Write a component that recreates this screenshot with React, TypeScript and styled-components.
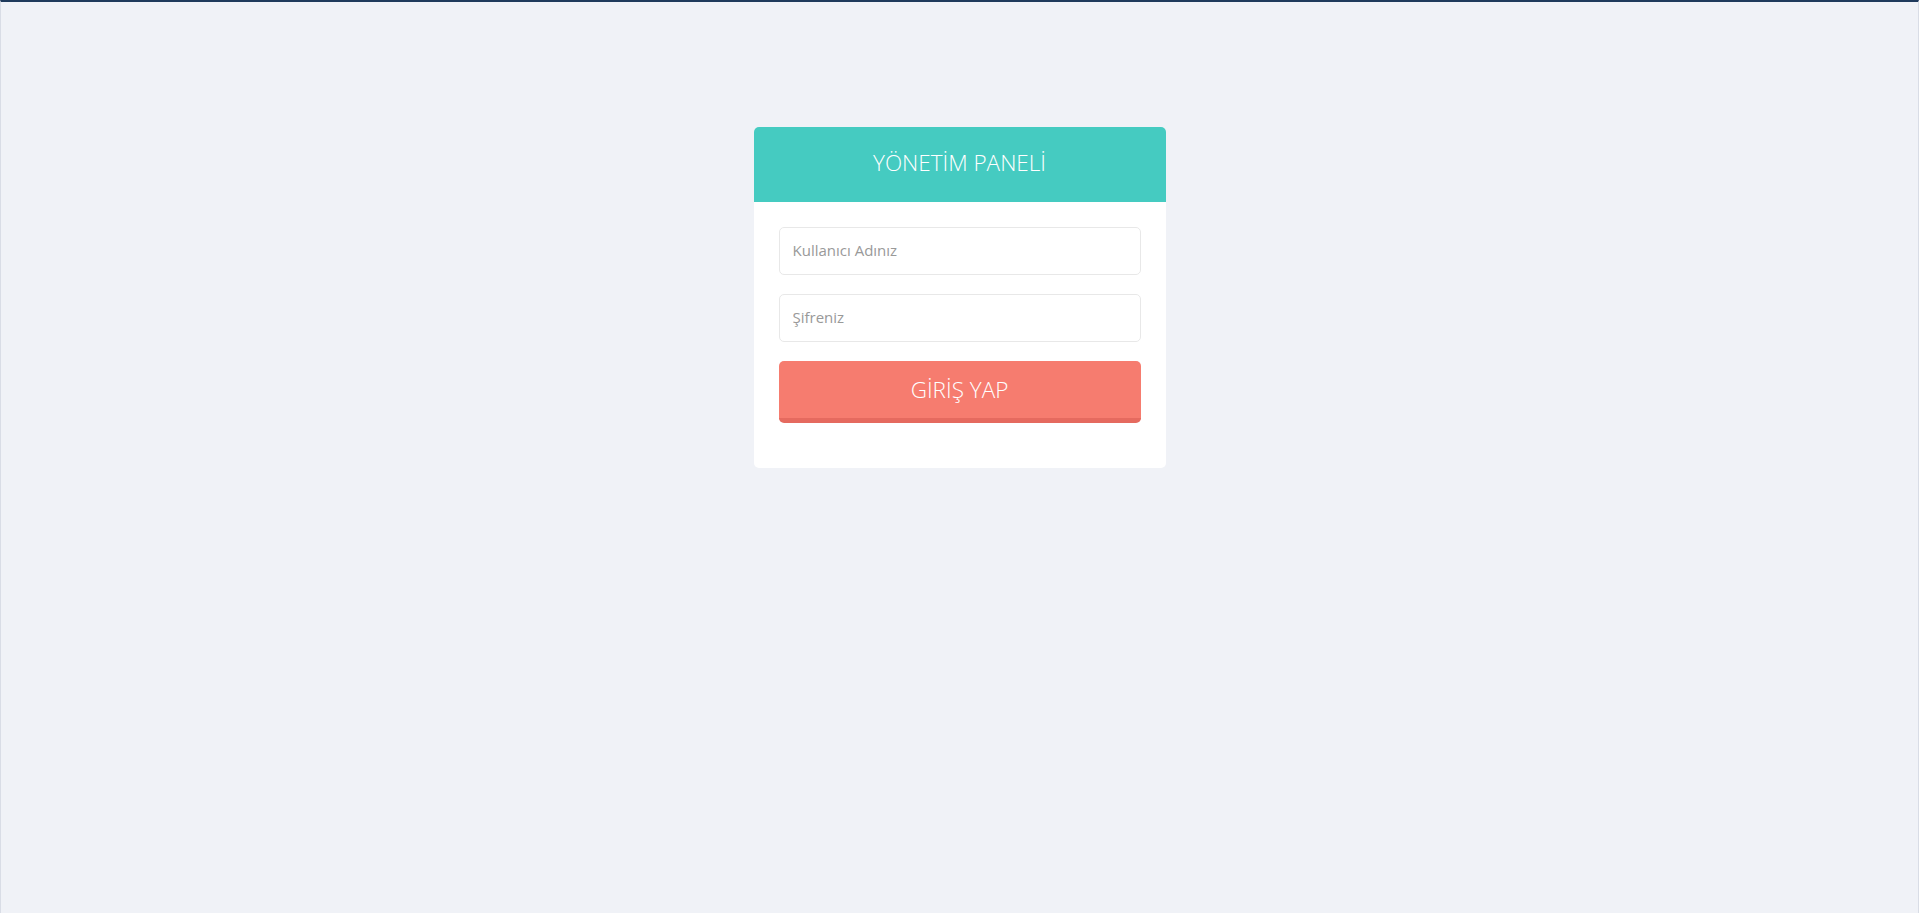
import React from "react";
import styled, {createGlobalStyle} from "styled-components";

const GlobalStyle = createGlobalStyle`
  html, body {
    margin: 0;
    padding: 0;
  }
  body {
    font-family: "Open Sans", "Liberation Sans", sans-serif;
    background: #f0f2f7;
  }
  * {
    box-sizing: border-box;
  }
`

const Page = styled.main`
  min-height: 100vh;
  border-top: 2px solid #1f3a5c;
  border-left: 1px solid #d9dde6;
  border-right: 1px solid #d9dde6;
  display: flex;
  justify-content: center;
  align-items: flex-start;
  padding-top: 125px;
`

const LoginCard = styled.form`
  width: 412px;
  background-color: white;
  border-radius: 5px;
  overflow: hidden;
  padding-bottom: 45px;
`

const CardHeader = styled.div`
  height: 75px;
  padding-bottom: 4px;
  background-color: #45cbc1;
  display: flex;
  align-items: center;
  justify-content: center;
`

const Title = styled.h2`
  margin: 0;
  color: white;
  font-size: 22.5px;
  font-weight: 300;
`

const CardBody = styled.div`
  display: flex;
  flex-direction: column;
  gap: 19px;
  padding: 25px 25px 0;
`

const Input = styled.input`
  height: 48px;
  width: 100%;
  border: 1px solid #e8e8e8;
  border-radius: 5px;
  padding: 0 13px 2px;
  font-family: "Open Sans", "Liberation Sans", sans-serif;
  font-size: 15px;
  color: #555;
  outline: none;

  &::placeholder {
    color: #999;
  }
`

const SubmitButton = styled.button`
  height: 62px;
  width: 100%;
  border: none;
  border-bottom: 5px solid #e56a5f;
  border-radius: 5px;
  background-color: #f67c6f;
  color: white;
  font-family: "Open Sans", "Liberation Sans", sans-serif;
  font-size: 22.5px;
  font-weight: 300;
  cursor: pointer;
  padding: 0;
`

const App: React.FunctionComponent = () => {
    return (
        <>
            <GlobalStyle/>
            <Page>
                <LoginCard onSubmit={(e) => e.preventDefault()}>
                    <CardHeader>
                        <Title>YÖNETİM PANELİ</Title>
                    </CardHeader>
                    <CardBody>
                        <Input type="text" placeholder="Kullanıcı Adınız"/>
                        <Input type="password" placeholder="Şifreniz"/>
                        <SubmitButton type="submit">GİRİŞ YAP</SubmitButton>
                    </CardBody>
                </LoginCard>
            </Page>
        </>
    )
}

export default App
